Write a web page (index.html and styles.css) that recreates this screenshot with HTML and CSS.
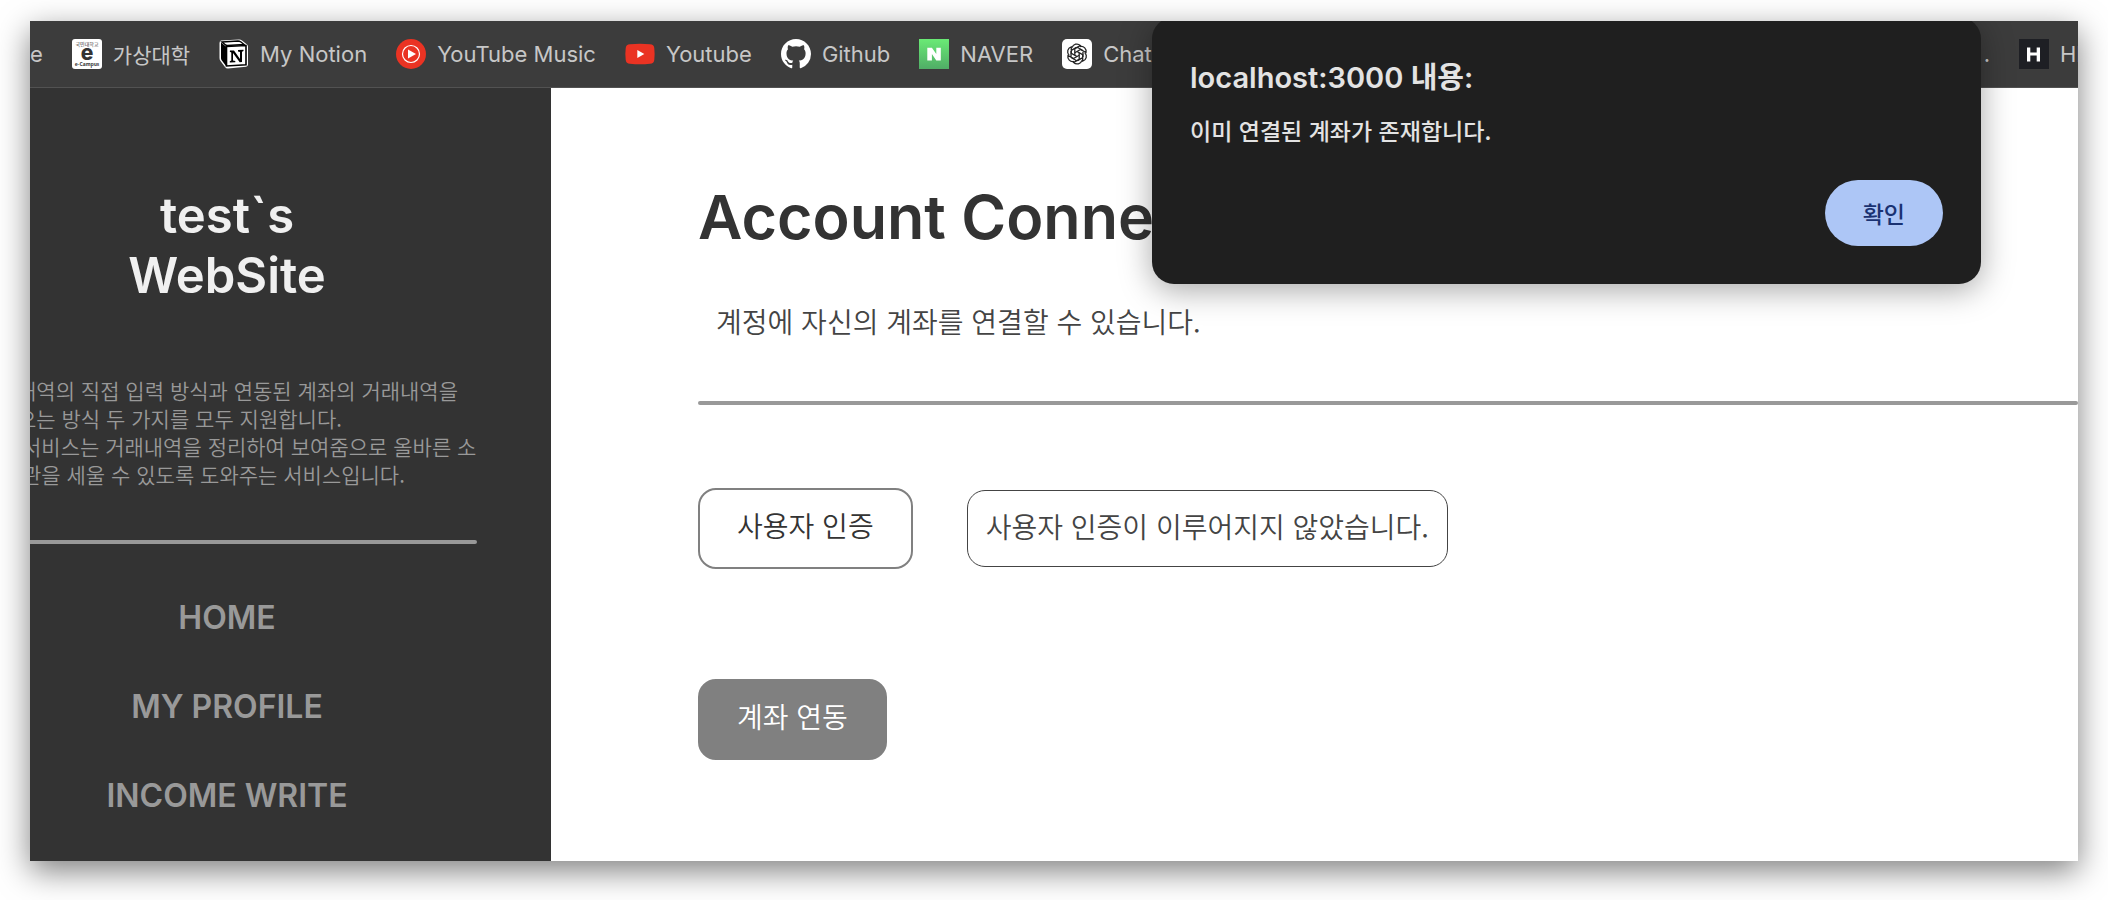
FILE: index.html
```html
<!DOCTYPE html>
<html lang="ko">
<head>
<meta charset="utf-8">
<title>Account Connect</title>
<link rel="stylesheet" href="styles.css">
</head>
<body>
<div class="window">
  <nav class="bookmarks" aria-label="Bookmarks">
    <a class="bookmark" href="#">e</a>
    <a class="bookmark" href="#">
      <svg class="icon" viewBox="0 0 30 30" aria-hidden="true"><rect width="30" height="30" rx="3" fill="#fff"/><text x="15" y="7" class="campus-small">국민대학교</text><text x="15" y="21" class="campus-e">e</text><text x="15" y="27" class="campus-small campus-bold">e-Campus</text></svg>
      <span class="ko">가상대학</span></a>
    <a class="bookmark" href="#">
      <svg class="icon" viewBox="0 0 30 30" aria-hidden="true"><path d="M2 1.5 20 .5q2 0 3 1l5 4q1 1 1 2v18q0 2-2 2.200L9 29.500q-2 0-3-1.500L1.500 22Q.5 21 .5 19V4q0-2 1.500-2.500Z" fill="#fff"/><path d="m3 3 16-1q1.500 0 3 1l3 2.500L8.500 6.500q-1.500 0-2.500-1Z" fill="#fff" stroke="#000" stroke-width="1.400"/><path d="M2 3.500 7 7.500V27L2.500 21Q2 20 2 19Z" fill="#000"/><path d="M7.500 7.500 27 6.500v19.300L7.500 27Z" fill="#fff" stroke="#000" stroke-width="1.600"/><path d="M11 11.500h4l6 8.500v-7l-2-.6v-1.300l5.500-.3v1.300l-1.500.7V23l-2.300.3L14 14v7.500l2.300.6v1.100l-5.500.4v-1.300l1.500-.8v-8l-1.500-.7Z" fill="#000"/></svg>
      <span>My Notion</span></a>
    <a class="bookmark" href="#">
      <svg class="icon" viewBox="0 0 30 30" aria-hidden="true"><circle cx="15" cy="15" r="15" fill="#ea3323"/><circle cx="15" cy="15" r="8.500" fill="none" stroke="#fff" stroke-width="1.200"/><path d="m12 10.500 8 4.500-8 4.500Z" fill="#fff"/></svg>
      <span>YouTube Music</span></a>
    <a class="bookmark" href="#">
      <svg class="icon" viewBox="0 0 30 30" aria-hidden="true"><path d="M5 5.200q10-1 20 0 4 .2 4.300 4 .7 6 0 11.600-.3 3.800-4.300 4-10 1-20 0-4-.2-4.300-4-.7-6 0-11.600Q1 5.400 5 5.200Z" fill="#ea3323"/><path d="m12.300 11 7 4-7 4Z" fill="#fff"/></svg>
      <span>Youtube</span></a>
    <a class="bookmark" href="#">
      <svg class="icon" viewBox="0 0 16 16" aria-hidden="true"><path fill="#fff" d="M8 0C3.580 0 0 3.580 0 8c0 3.540 2.290 6.530 5.470 7.590.4.070.55-.17.55-.38 0-.19-.01-.82-.01-1.490-2.010.37-2.530-.49-2.690-.94-.09-.23-.48-.94-.82-1.130-.28-.15-.68-.52-.01-.53.63-.01 1.080.58 1.230.82.72 1.210 1.870.87 2.330.66.070-.52.28-.87.51-1.070-1.780-.2-3.640-.89-3.640-3.950 0-.87.31-1.590.82-2.150-.08-.2-.36-1.020.08-2.120 0 0 .67-.21 2.200.82.64-.18 1.320-.27 2-.27s1.360.09 2 .27c1.530-1.040 2.200-.82 2.200-.82.44 1.100.16 1.920.08 2.120.51.56.82 1.270.82 2.150 0 3.070-1.870 3.750-3.650 3.950.29.25.54.73.54 1.480 0 1.070-.01 1.930-.01 2.200 0 .21.15.46.55.38A8.010 8.010 0 0 0 16 8c0-4.420-3.580-8-8-8Z"/></svg>
      <span>Github</span></a>
    <a class="bookmark" href="#">
      <svg class="icon" viewBox="0 0 30 30" aria-hidden="true"><defs><linearGradient id="green" x2="0" y2="1"><stop stop-color="#6aea75"/><stop offset="1" stop-color="#50ad66"/></linearGradient></defs><rect width="30" height="30" fill="url(#green)"/><path d="M8.300 8.800h4.600l4.400 6.300V8.800h4.500v12.700h-4.500L12.900 15v6.500H8.300Z" fill="#fff"/></svg>
      <span>NAVER</span></a>
    <a class="bookmark" href="#">
      <svg class="icon" viewBox="0 0 30 30" aria-hidden="true"><defs><path id="petal" d="M-4.900-6.300a4.900 4.900 0 0 1 8.200-2.200L-2.200-5.300V1.300M-.2-7 5.500-3.700"/></defs><rect width="30" height="30" rx="5" fill="#fff"/><g transform="translate(15 15)" fill="none" stroke="#222" stroke-width="1.300"><use href="#petal"/><use href="#petal" transform="rotate(60)"/><use href="#petal" transform="rotate(120)"/><use href="#petal" transform="rotate(180)"/><use href="#petal" transform="rotate(240)"/><use href="#petal" transform="rotate(300)"/></g></svg>
      <span>Chat</span></a>
    <a class="bookmark bookmark-end" href="#">.</a>
    <a class="bookmark bookmark-cut" href="#">
      <svg class="icon" viewBox="0 0 30 30" aria-hidden="true"><rect width="30" height="30" fill="#1e1f24"/><path d="M8 8.500h3.300v5h6.400v-5H21v14h-3.300v-6h-6.400v6H8Z" fill="#fff"/></svg>
      <span>HI</span></a>
  </nav>

  <div class="page">
    <aside class="sidebar">
      <div class="sidebar-inner">
        <h2 class="site-title">test`s<br>WebSite</h2>
        <div class="about">
          <p class="about-text">내역의 직접 입력 방식과 연동된 계좌의 거래내역을<br>오는 방식 두 가지를 모두 지원합니다.</p>
          <p class="about-text about-service">서비스는 거래내역을 정리하여 보여줌으로 올바른 소<br>관을 세울 수 있도록 도와주는 서비스입니다.</p>
        </div>
        <hr class="divider">
        <nav class="menu" aria-label="Menu">
          <a href="#">HOME</a>
          <a href="#">MY PROFILE</a>
          <a href="#">INCOME WRITE</a>
        </nav>
      </div>
    </aside>
    <main class="content">
      <h1 class="heading">Account Connect</h1>
      <p class="lead">계정에 자신의 계좌를 연결할 수 있습니다.</p>
      <hr class="divider">
      <div class="auth">
        <button class="btn btn-outline" type="button">사용자 인증</button>
        <output class="status">사용자 인증이 이루어지지 않았습니다.</output>
      </div>
      <button class="btn btn-solid" type="button">계좌 연동</button>
    </main>
  </div>

  <div class="dialog" role="alertdialog" aria-labelledby="dialog-title" aria-describedby="dialog-text">
    <h2 class="dialog-title" id="dialog-title">localhost:3000 내용:</h2>
    <p class="dialog-text" id="dialog-text">이미 연결된 계좌가 존재합니다.</p>
    <button class="dialog-ok" type="button">확인</button>
  </div>
</div>
</body>
</html>
```
FILE: styles.css
```css
* {
  box-sizing: border-box;
}

body {
  margin: 0;
  padding: 21px 30px 39px;
  background: #fff;
  font-family: Inter, "Noto Sans CJK KR", sans-serif;
}

h1, h2, p, hr {
  margin: 0;
}

a {
  color: inherit;
  text-decoration: none;
}

button {
  font: inherit;
  cursor: pointer;
}

.window {
  position: relative;
  display: flex;
  flex-direction: column;
  min-height: calc(100vh - 60px);
  background: #fff;
  box-shadow: 0 10px 30px rgba(0, 0, 0, .5);
}

/* Bookmark bar */
.bookmarks {
  display: flex;
  align-items: center;
  gap: 29px;
  height: 67px;
  overflow: hidden;
  border-bottom: 1px solid #525252;
  background: #3c3c3c;
  color: #c7c7c7;
  font-size: 22px;
  font-weight: 400;
  white-space: nowrap;
}

.bookmark {
  display: flex;
  flex: none;
  align-items: center;
  gap: 11px;
}

.bookmark-end {
  margin-left: auto;
}

.bookmark-cut {
  width: 59px;
  overflow: hidden;
}

.icon {
  flex: none;
  width: 30px;
  height: 30px;
}

.ko,
.about-text,
.lead,
.btn,
.status,
.dialog-text,
.dialog-ok {
  font-family: "Noto Sans CJK KR", sans-serif;
}

.ko {
  font-size: 21px;
}

.campus-small {
  font: 5px "Noto Sans CJK KR", sans-serif;
  text-anchor: middle;
  fill: #333;
}

.campus-bold {
  font-weight: 700;
}

.campus-e {
  font: 800 21px Inter, sans-serif;
  text-anchor: middle;
  fill: #333;
}

/* Page */
.page {
  display: flex;
  flex: 1;
}

.sidebar {
  flex: none;
  width: 521px;
  padding: 98px 74px 40px 0;
  overflow: hidden;
  background: #333;
  color: #999;
}

.sidebar-inner {
  margin-left: -53px;
}

.site-title {
  color: #f0f0f0;
  font-size: 49px;
  font-weight: 600;
  line-height: 60px;
  text-align: center;
}

.about {
  margin: 70px 0 52px;
  padding-left: 40px;
}

.about-text {
  font-size: 21px;
  font-weight: 350;
  line-height: 28px;
  white-space: nowrap;
}

.about-service {
  padding-left: 5px;
}

.divider {
  height: 4px;
  border: 0;
  border-radius: 2px;
  background: #999;
}

.menu {
  display: flex;
  flex-direction: column;
  align-items: center;
  gap: 49px;
  margin-top: 54px;
  font-size: 32px;
  font-weight: 600;
  line-height: 40px;
}

.content {
  flex: 1;
  min-width: 0;
  padding: 90px 0 40px 147px;
  color: #333;
}

.heading {
  font-size: 61px;
  font-weight: 600;
  line-height: 78px;
}

.lead {
  margin: 45px 0 60px;
  padding-left: 18px;
  color: #444;
  font-size: 28px;
  font-weight: 350;
  line-height: 40px;
}

.auth {
  display: flex;
  align-items: center;
  gap: 54px;
  margin: 83px 0 110px;
}

.btn {
  padding: 15px 37px 21px;
  border: 2px solid #808080;
  border-radius: 18px;
  font-size: 28px;
  font-weight: 350;
  line-height: 41px;
}

.btn-outline {
  background: #fff;
  color: #333;
}

.btn-solid {
  background: #808080;
  color: #fff;
}

.status {
  padding: 16px 18px 20px;
  border: 1px solid #444;
  border-radius: 18px;
  color: #444;
  font-size: 28px;
  font-weight: 350;
  line-height: 39px;
}

/* Alert dialog, hanging from the top of the window */
.dialog {
  position: absolute;
  top: -4px;
  right: 97px;
  display: flex;
  flex-direction: column;
  width: 829px;
  padding: 42px 38px 38px;
  border-radius: 22px;
  background: #1f1f1f;
  color: #e3e3e3;
  box-shadow: 0 6px 32px rgba(0, 0, 0, .35);
  clip-path: inset(4px -60px -60px);
}

.dialog-title {
  font-size: 29px;
  font-weight: 600;
  line-height: 38px;
}

.dialog-text {
  margin: 16px 0 33px;
  font-size: 23px;
  font-weight: 500;
  line-height: 34px;
}

.dialog-ok {
  align-self: flex-end;
  padding: 16px 38px;
  border: 0;
  border-radius: 33px;
  background: #adc6f6;
  color: #1a3272;
  font-size: 23px;
  font-weight: 500;
  line-height: 34px;
}
```
